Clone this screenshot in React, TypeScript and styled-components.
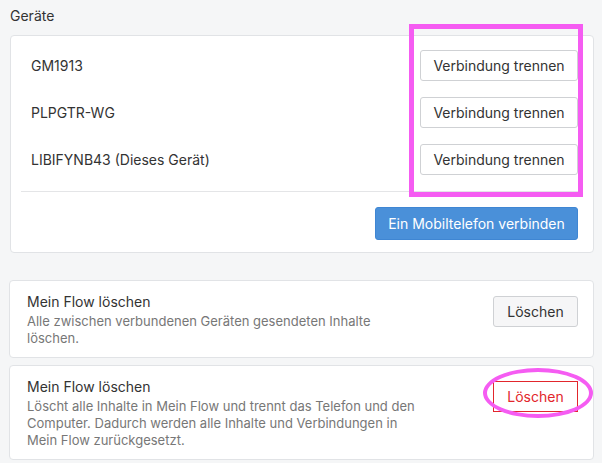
import React from "react";
import styled, { createGlobalStyle } from "styled-components";

const GlobalStyle = createGlobalStyle`
  body {
    margin: 0;
    background: #f5f6f7;
    font-family: Inter, "Noto Sans", "Liberation Sans", sans-serif;
    color: #333;
    -webkit-font-smoothing: antialiased;
  }
`;

const Page = styled.div`
  position: relative;
  width: 602px;
  height: 463px;
  padding: 7px 8px 0 9px;
  box-sizing: border-box;
  overflow: hidden;
`;

const SectionTitle = styled.div`
  font-size: 14px;
  line-height: 17px;
  margin-left: 1px;
  margin-bottom: 11px;
`;

const Card = styled.section<{ $top?: number }>`
  background: #fff;
  border: 1px solid #e1e3e6;
  border-radius: 4px;
  margin-top: ${({ $top }) => ($top ?? 0) + "px"};
`;

const DeviceCard = styled(Card)`
  margin-left: 1px;
  padding: 14px 15px 12px 10px;
`;

const DeviceList = styled.div`
  display: flex;
  flex-direction: column;
  gap: 16px;
  padding-bottom: 16px;
  border-bottom: 1px solid #e4e5e7;
`;

const DeviceRow = styled.div`
  display: flex;
  align-items: center;
  justify-content: space-between;
  padding-left: 10px;
`;

const DeviceName = styled.span`
  font-size: 14px;
`;

const Footer = styled.div`
  display: flex;
  justify-content: flex-end;
  padding-top: 15px;
`;

const Button = styled.button<{ $variant?: "default" | "muted" | "primary" | "danger" }>`
  font-family: inherit;
  font-size: 14px;
  height: 31px;
  padding: 0;
  white-space: nowrap;
  box-sizing: border-box;
  cursor: pointer;
  border: 1px solid
    ${({ $variant }) =>
      $variant === "primary" ? "#3f86d3" : $variant === "danger" ? "#e2262c" : "#cfd1d4"};
  background: ${({ $variant }) =>
    $variant === "primary" ? "#4a90d9" : $variant === "muted" ? "#f6f6f7" : "#fff"};
  color: ${({ $variant }) =>
    $variant === "primary" ? "#fff" : $variant === "danger" ? "#e2262c" : "#333"};
  border-radius: ${({ $variant }) => ($variant === "danger" ? "0" : "3px")};
`;

const DeviceButton = styled(Button)`
  width: 158px;
`;

const PrimaryButton = styled(Button)`
  height: 33px;
  width: 203px;
`;

const ActionButton = styled(Button)<{ $offset?: number }>`
  width: 85px;
  flex-shrink: 0;
  margin-top: ${({ $offset }) => ($offset ?? 0) + "px"};
`;

const ActionCard = styled(Card)`
  display: flex;
  justify-content: space-between;
  align-items: flex-start;
  padding: 12px 15px 10px 17px;
`;

const ActionText = styled.div`
  max-width: 400px;
`;

const ActionTitle = styled.div`
  font-size: 14px;
  line-height: 18px;
  margin-bottom: 2px;
`;

const ActionDesc = styled.div`
  font-size: 13px;
  line-height: 17px;
  color: #777;
`;

const AnnotationBox = styled.div`
  position: absolute;
  left: 409px;
  top: 24px;
  width: 174px;
  height: 173px;
  border: 5px solid #f55cf2;
  box-sizing: border-box;
  pointer-events: none;
`;

const AnnotationRing = styled.div`
  position: absolute;
  left: 483px;
  top: 368px;
  width: 110px;
  height: 50px;
  border: 4px solid #f55cf2;
  border-radius: 50%;
  box-sizing: border-box;
  pointer-events: none;
`;

const devices = ["GM1913", "PLPGTR-WG", "LIBIFYNB43 (Dieses Gerät)"];

const App = () => {
  return (
    <>
      <GlobalStyle />
      <Page>
        <SectionTitle>Geräte</SectionTitle>
        <DeviceCard>
          <DeviceList>
            {devices.map((name) => (
              <DeviceRow key={name}>
                <DeviceName>{name}</DeviceName>
                <DeviceButton>Verbindung trennen</DeviceButton>
              </DeviceRow>
            ))}
          </DeviceList>
          <Footer>
            <PrimaryButton $variant="primary">Ein Mobiltelefon verbinden</PrimaryButton>
          </Footer>
        </DeviceCard>

        <ActionCard $top={27}>
          <ActionText>
            <ActionTitle>Mein Flow löschen</ActionTitle>
            <ActionDesc>
              Alle zwischen verbundenen Geräten gesendeten Inhalte
              <br />
              löschen.
            </ActionDesc>
          </ActionText>
          <ActionButton $variant="muted" $offset={3}>
            Löschen
          </ActionButton>
        </ActionCard>

        <ActionCard $top={7}>
          <ActionText>
            <ActionTitle>Mein Flow löschen</ActionTitle>
            <ActionDesc>
              Löscht alle Inhalte in Mein Flow und trennt das Telefon und den
              <br />
              Computer. Dadurch werden alle Inhalte und Verbindungen in
              <br />
              Mein Flow zurückgesetzt.
            </ActionDesc>
          </ActionText>
          <ActionButton $variant="danger" $offset={3}>
            Löschen
          </ActionButton>
        </ActionCard>

        <AnnotationBox />
        <AnnotationRing />
      </Page>
    </>
  );
};

export default App;
